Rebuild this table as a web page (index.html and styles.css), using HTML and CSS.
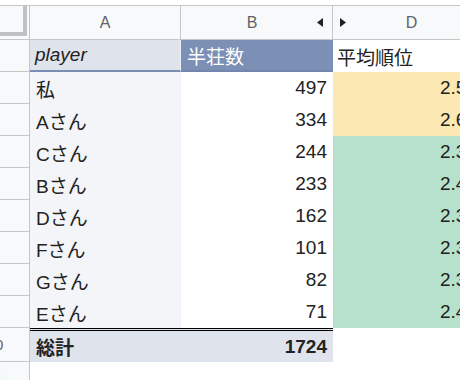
FILE: index.html
```html
<!DOCTYPE html>
<html lang="ja">
<head>
<meta charset="utf-8">
<title>Sheet</title>
<link rel="stylesheet" href="styles.css">
</head>
<body>
<div class="sheet">
  <div class="corner"><div class="freeze"></div></div>
  <div class="colhead">A</div>
  <div class="colhead colhead-b"><span></span><span>B</span><svg class="tri" width="6" height="9" viewBox="0 0 6 9"><path d="M6 0 L0 4.5 L6 9Z"/></svg></div>
  <div class="colhead colhead-d"><svg class="tri" width="6" height="9" viewBox="0 0 6 9"><path d="M0 0 L6 4.5 L0 9Z"/></svg><span>D</span><span></span></div>

  <div class="rowhead"><span>1</span></div>
  <div class="cell hdr-a">player</div>
  <div class="cell hdr-b">半荘数</div>
  <div class="cell hdr-d">平均順位</div>

  <div class="rowhead"><span>2</span></div>
  <div class="cell name">私</div>
  <div class="cell num">497</div>
  <div class="cell rank warn">2.55</div>

  <div class="rowhead"><span>3</span></div>
  <div class="cell name">Aさん</div>
  <div class="cell num">334</div>
  <div class="cell rank warn">2.62</div>

  <div class="rowhead"><span>4</span></div>
  <div class="cell name">Cさん</div>
  <div class="cell num">244</div>
  <div class="cell rank good">2.38</div>

  <div class="rowhead"><span>5</span></div>
  <div class="cell name">Bさん</div>
  <div class="cell num">233</div>
  <div class="cell rank good">2.41</div>

  <div class="rowhead"><span>6</span></div>
  <div class="cell name">Dさん</div>
  <div class="cell num">162</div>
  <div class="cell rank good">2.35</div>

  <div class="rowhead"><span>7</span></div>
  <div class="cell name">Fさん</div>
  <div class="cell num">101</div>
  <div class="cell rank good">2.32</div>

  <div class="rowhead"><span>8</span></div>
  <div class="cell name">Gさん</div>
  <div class="cell num">82</div>
  <div class="cell rank good">2.39</div>

  <div class="rowhead"><span>9</span></div>
  <div class="cell name">Eさん</div>
  <div class="cell num">71</div>
  <div class="cell rank good">2.45</div>

  <div class="rowhead"><span>10</span></div>
  <div class="cell tot tot-a">総計</div>
  <div class="cell tot tot-b">1724</div>
  <div class="cell"></div>

  <div class="rowhead"><span>11</span></div>
  <div class="cell"></div>
  <div class="cell"></div>
  <div class="cell"></div>
</div>
</body>
</html>
```

FILE: styles.css
```css
* { box-sizing: border-box; }
html, body {
  margin: 0;
  overflow: hidden;
  background: #fff;
}
body {
  font-family: "Liberation Sans", "Noto Sans CJK JP", sans-serif;
  color: #222;
}
.sheet {
  display: grid;
  grid-template-columns: 30px 151px 152px 150px;
  grid-template-rows: 35px 32px repeat(8, 32px) 34px 32px;
  width: 483px;
  margin-top: 5px;
}
.corner {
  background: #f8f9fa;
  border-top: 1px solid #c4c7c5;
  border-right: 1px solid #c4c7c5;
  border-bottom: 1px solid #c4c7c5;
}
.freeze {
  width: 27px;
  height: 30px;
  border-right: 4px solid #bfc1c3;
  border-bottom: 4px solid #bfc1c3;
}
.colhead {
  background: #f8f9fa;
  border-top: 1px solid #c4c7c5;
  border-right: 1px solid #c4c7c5;
  border-bottom: 1px solid #c4c7c5;
  font-size: 16px;
  color: #5f6368;
  display: flex;
  align-items: center;
  justify-content: center;
}
.colhead-b {
  display: grid;
  grid-template-columns: 1fr auto 1fr;
  align-items: center;
  padding-right: 9px;
}
.colhead-b .tri { justify-self: end; }
.colhead-d {
  display: grid;
  grid-template-columns: 1fr auto 1fr;
  align-items: center;
  padding-left: 7px;
  border-right: none;
}
.colhead-d .tri { justify-self: start; }
.tri { fill: #202124; display: block; }

.rowhead {
  background: #f8f9fa;
  border-right: 1px solid #c4c7c5;
  border-bottom: 1px solid #c4c7c5;
  display: flex;
  justify-content: flex-end;
  align-items: center;
  padding-right: 14px;
  overflow: hidden;
  font-size: 15px;
  color: #5f6368;
}
.rowhead span {
  flex-shrink: 0;
  width: 40px;
  text-align: center;
}

.cell {
  font-size: 19px;
  display: flex;
  align-items: center;
  white-space: nowrap;
  overflow: hidden;
}
.hdr-a {
  background: #dfe3ec;
  font-style: italic;
  padding-left: 5px;
  border-bottom: 2px solid #7b8db3;
  border-right: 1px solid #eef0f5;
}
.hdr-b {
  background: #7c8fb5;
  color: #fff;
  padding-left: 6px;
  border-bottom: 2px solid #7386ad;
}
.hdr-d {
  background: #fff;
  padding-left: 4px;
}
.name {
  background: #f4f5f8;
  padding-left: 6px;
}
.num {
  background: #fff;
  justify-content: flex-end;
  padding-right: 6px;
}
.rank {
  justify-content: flex-end;
  padding-right: 6px;
}
.warn { background: #fce8b2; }
.good { background: #b7e1cd; }
.tot {
  background: #dfe3ec;
  border-top: 3px double #000;
  font-weight: bold;
}
.tot-a { padding-left: 6px; }
.tot-b {
  justify-content: flex-end;
  padding-right: 6px;
}
```
